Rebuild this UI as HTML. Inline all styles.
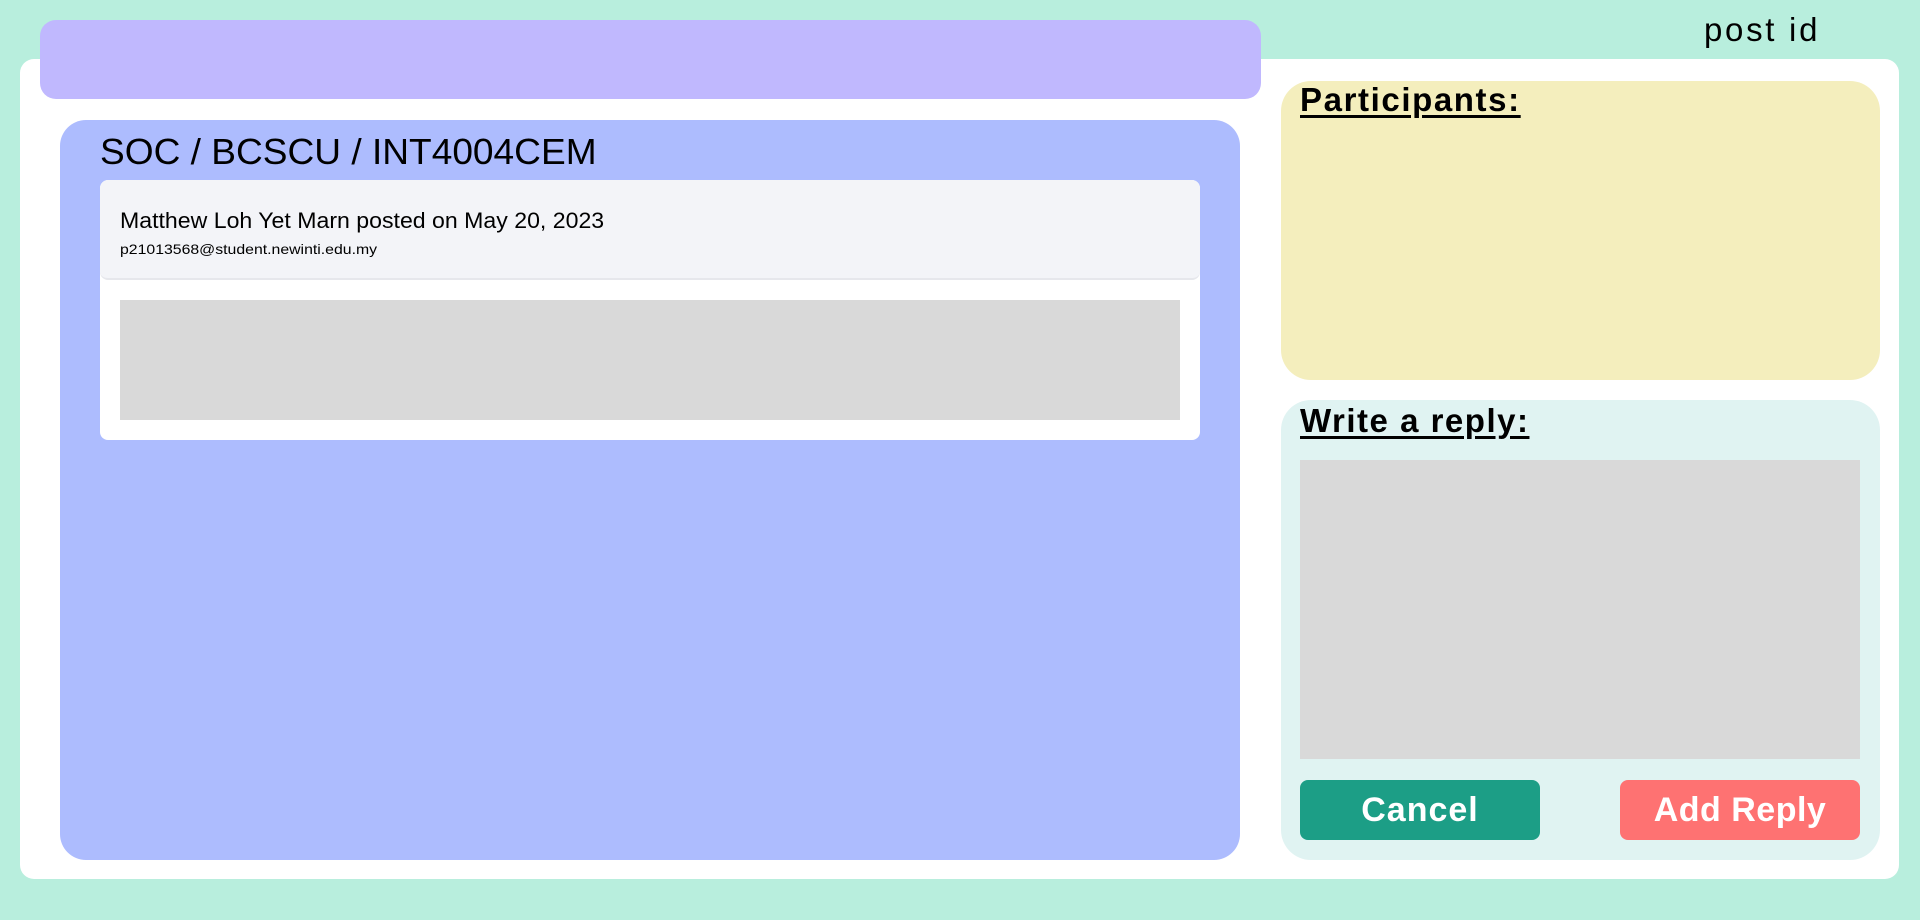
<!DOCTYPE html>
<html><head><meta charset="utf-8"><style>
*{margin:0;padding:0;box-sizing:border-box}
body{width:1920px;height:920px;background:#b8eedd;position:relative;overflow:hidden;font-family:"Liberation Sans",sans-serif;color:#000}
.a{position:absolute}
</style></head><body>
<div class="a" style="left:20px;top:59px;width:1879px;height:820px;background:#fff;border-radius:14px"></div>
<div class="a" style="left:40px;top:20px;width:1221px;height:79px;background:#c0b8fe;border-radius:16px"></div>
<div class="a" style="left:1704px;top:11px;font-size:33px;letter-spacing:2.7px">post id</div>
<div class="a" style="left:60px;top:120px;width:1180px;height:740px;background:#adbcfe;border-radius:26px"></div>
<div class="a" style="left:100px;top:131px;font-size:36px;transform:scaleX(1.03);transform-origin:left">SOC / BCSCU / INT4004CEM</div>
<div class="a" style="left:100px;top:180px;width:1100px;height:260px;background:#fff;border-radius:8px;overflow:hidden">
  <div style="height:100px;background:#f3f4f8;border-bottom:2px solid #e6e7ec;border-radius:8px"></div>
</div>
<div class="a" style="left:120px;top:208px;font-size:22px;transform:scaleX(1.05);transform-origin:left">Matthew Loh Yet Marn posted on May 20, 2023</div>
<div class="a" style="left:120px;top:241px;font-size:14px;transform:scaleX(1.13);transform-origin:left">p21013568@student.newinti.edu.my</div>
<div class="a" style="left:120px;top:300px;width:1060px;height:120px;background:#d9d9d9"></div>
<div class="a" style="left:1281px;top:81px;width:599px;height:299px;background:#f4eebd;border-radius:30px"></div>
<div class="a" style="left:1300px;top:81px;font-size:33px;font-weight:bold;text-decoration:underline;text-underline-offset:4px;letter-spacing:1.6px">Participants:</div>
<div class="a" style="left:1281px;top:400px;width:599px;height:460px;background:#e0f3f2;border-radius:30px"></div>
<div class="a" style="left:1300px;top:402px;font-size:33px;font-weight:bold;text-decoration:underline;text-underline-offset:4px;letter-spacing:1.5px">Write a reply:</div>
<div class="a" style="left:1300px;top:460px;width:560px;height:299px;background:#d9d9d9"></div>
<div class="a" style="left:1300px;top:780px;width:240px;height:60px;background:#1c9e86;border-radius:8px;color:#fff;font-size:34px;font-weight:bold;text-align:center;line-height:60px;letter-spacing:1px">Cancel</div>
<div class="a" style="left:1620px;top:780px;width:240px;height:60px;background:#fe7272;border-radius:8px;color:#fff;font-size:34px;font-weight:bold;text-align:center;line-height:60px;letter-spacing:0.5px">Add Reply</div>
</body></html>
